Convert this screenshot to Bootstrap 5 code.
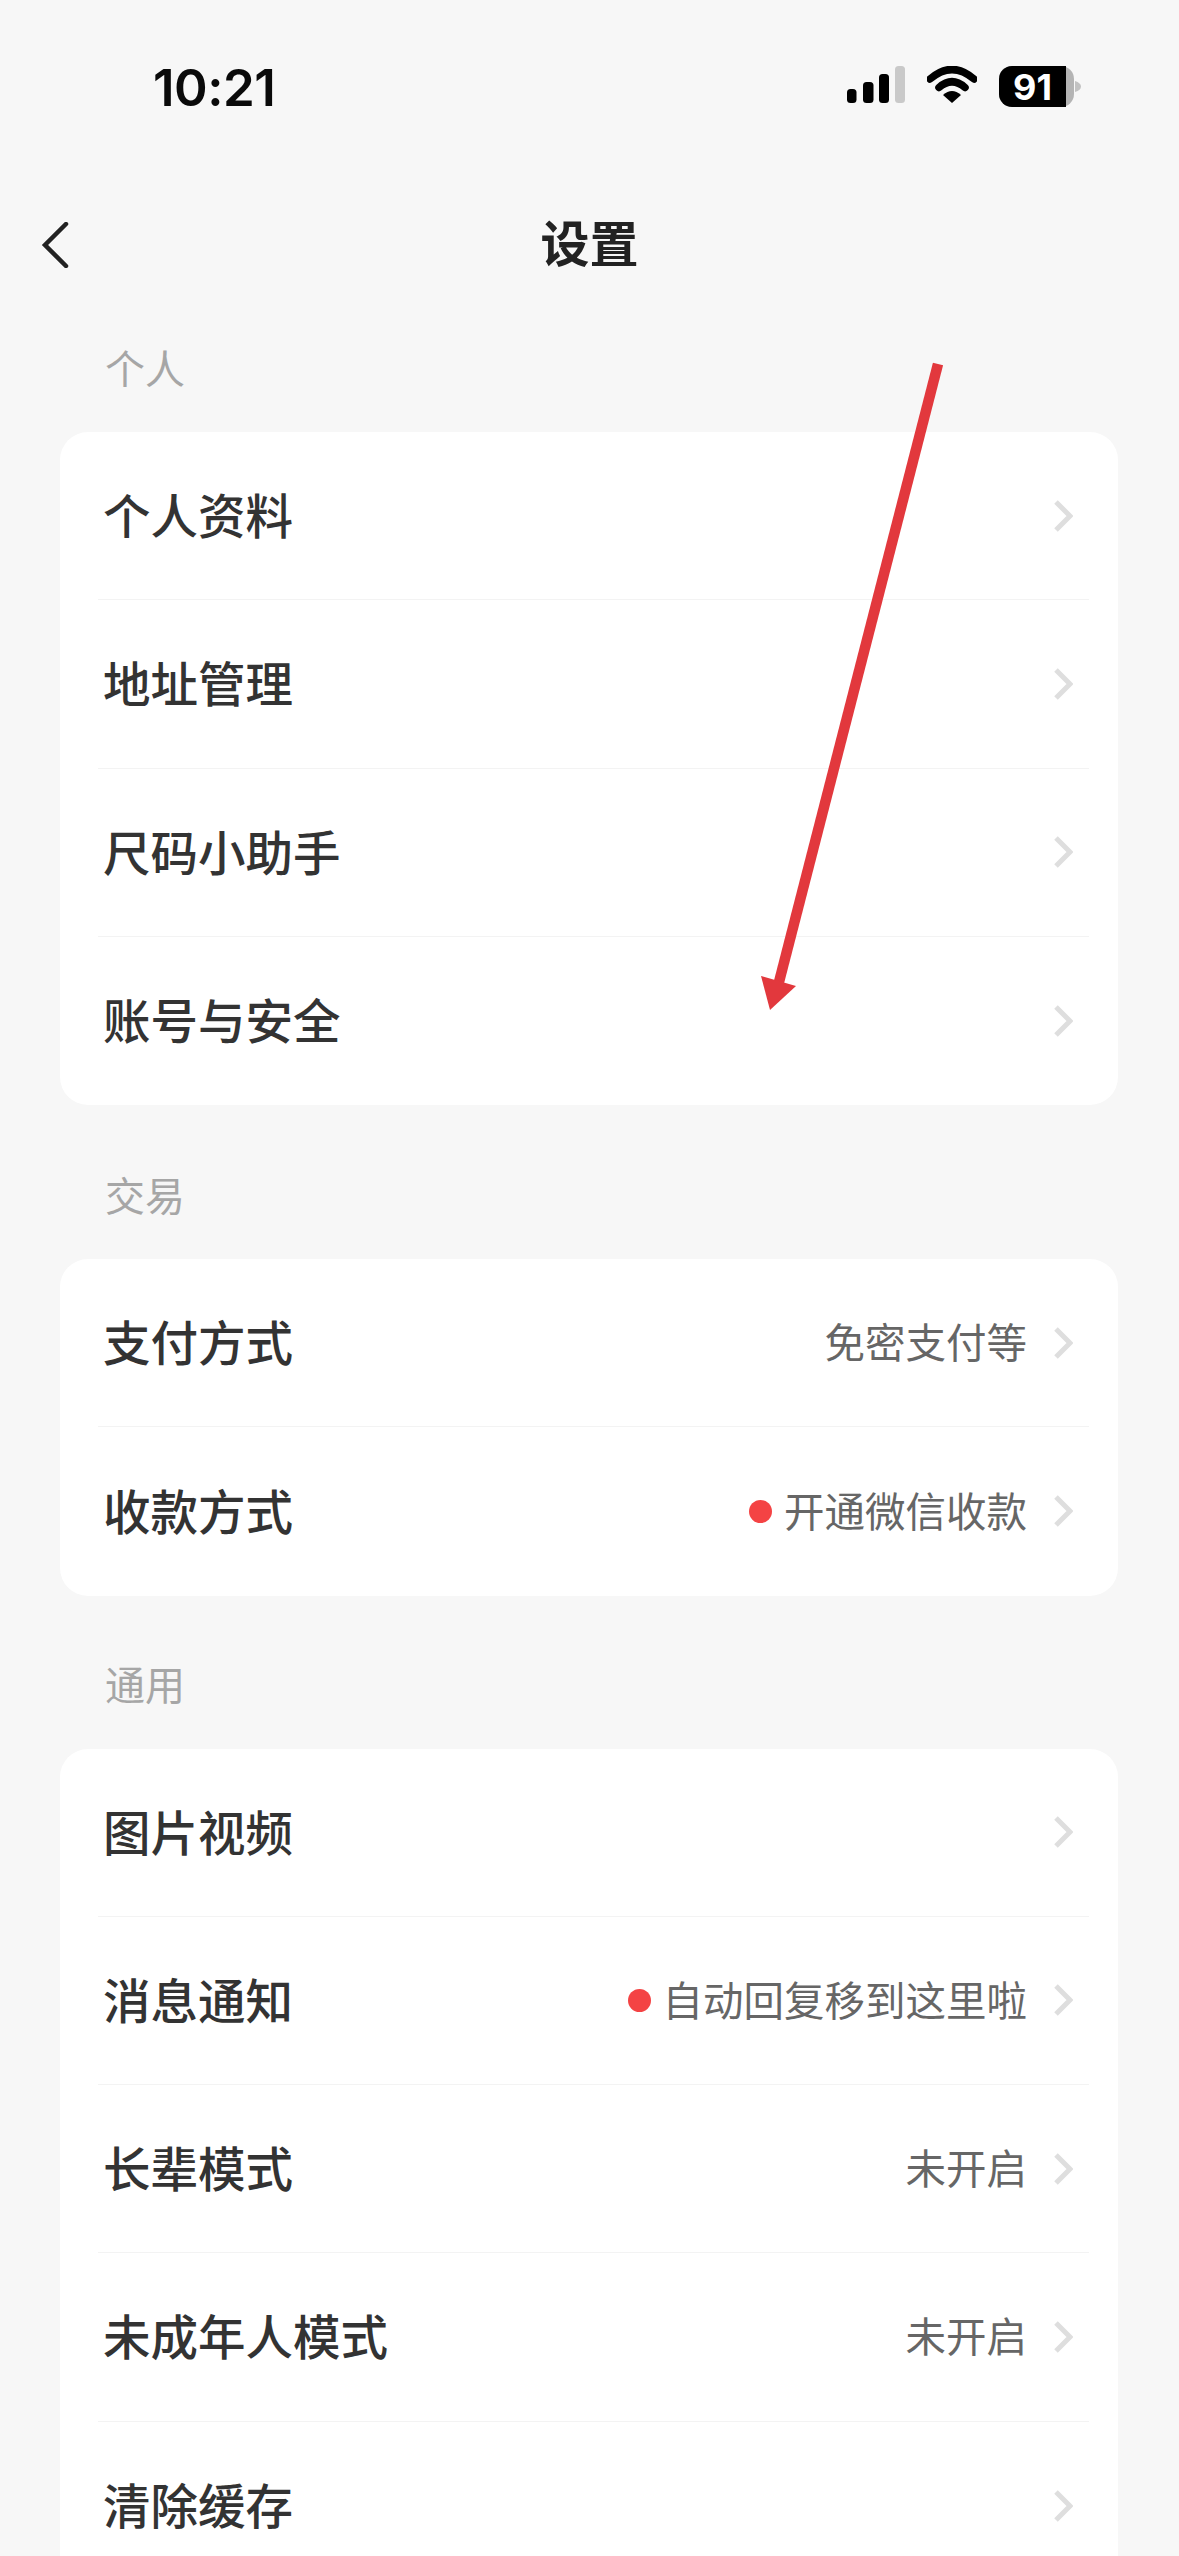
<!DOCTYPE html>
<html lang="zh-CN">

<head>
    <meta charset="UTF-8">
    <meta name="viewport" content="width=device-width, initial-scale=1.0">
    <title>设置</title>
    <link href="https://cdn.jsdelivr.net/npm/bootstrap@5.3.0/dist/css/bootstrap.min.css" rel="stylesheet">
    <style>
        html, body { height: 2556px; overflow: hidden; }
        body {
            background: #f7f7f7;
            color: #333;
            font-family: "Noto Sans CJK SC", "Liberation Sans", sans-serif;
            position: relative;
        }
        .status-bar { height: 170px; padding: 66px 98px 0 153px; }
        .status-time { font-family: Inter, "Liberation Sans", sans-serif; font-weight: 600; font-size: 51px; line-height: 44px; color: #0a0a0a; letter-spacing: -.5px; }
        .status-icons { gap: 22px; }
        .nav-row { height: 150px; display: grid; grid-template-columns: 1fr auto 1fr; align-items: center; }
        .nav-back { margin-left: 41px; }
        .nav-title { font-size: 49px; line-height: 60px; font-weight: 700; color: #222; padding-bottom: 8px; }
        .sec-title { font-size: 40px; line-height: 56px; color: #a6a6a6; padding: 61px 0 37px 45px; margin: 0 61px 0 60px; }
        .sec-title.first-title { padding-top: 19px; padding-bottom: 37px; }
        .sec-title.third-title { padding-top: 59px; padding-bottom: 38px; }
        .set-card { margin: 0 61px 0 60px; border-radius: 28px; background: #fff; border: 0; }
        .set-row { height: 168.25px; margin: 0 29px 0 38px; padding: 0 0 0 5px; border-bottom: 1px solid #f3f3f3; }
        .set-row:last-child { border-bottom: 0; }
        .row-name { font-size: 47.5px; font-weight: 500; color: #333; line-height: 60px; padding-bottom: 3px; }
        .row-val { font-size: 40.5px; color: #666; line-height: 56px; padding-bottom: 3px; }
        .row-dot { width: 23px; height: 23px; border-radius: 50%; background: #f44344; margin-right: 12px; }
        .row-chev { margin: 0 16px 0 26px; }
        .arrow-over { position: absolute; left: 0; top: 0; pointer-events: none; }
    </style>
</head>

<body>
    <div class="status-bar d-flex justify-content-between align-items-start">
        <div class="status-time">10:21</div>
        <div class="status-icons d-flex align-items-center">
            <svg width="58" height="42" viewBox="0 0 58 42">
                <rect x="0" y="23" width="9.5" height="14" rx="3.5" fill="#000" />
                <rect x="16" y="16" width="10.5" height="21" rx="3.5" fill="#000" />
                <rect x="32" y="8" width="10" height="29" rx="3.5" fill="#000" />
                <rect x="48" y="0" width="10" height="37" rx="3.5" fill="#c9c9c9" />
            </svg>
            <svg width="50" height="42" viewBox="0 0 50 42">
                <path d="M3 13 Q25 -6 47 13" fill="none" stroke="#000" stroke-width="7.5" stroke-linecap="round" />
                <path d="M12 21.5 Q25 10 38 21.5" fill="none" stroke="#000" stroke-width="7.5" stroke-linecap="round" />
                <path d="M16 29 Q25 21 34 29 L25 37 Z" fill="#000" />
            </svg>
            <svg width="82" height="42" viewBox="0 0 82 42">
                <rect x="0" y="0" width="75" height="41" rx="13" fill="#b4b4b4" />
                <path d="M13 0 H67 V41 H13 A13 13 0 0 1 0 28 V13 A13 13 0 0 1 13 0 Z" fill="#000" />
                <path d="M76 15 Q82 17 82 20.5 Q82 24 76 26 Z" fill="#c2c2c2" />
                <text x="33.5" y="34" text-anchor="middle" font-family="Inter, 'Liberation Sans', sans-serif" font-weight="700" font-size="36" fill="#fff">91</text>
            </svg>
        </div>
    </div>

    <div class="nav-row">
        <svg class="nav-back" width="28" height="46" viewBox="0 0 28 46">
            <path d="M25 2 L4 23 L25 44" fill="none" stroke="#222" stroke-width="4.5" stroke-linecap="round" stroke-linejoin="miter" />
        </svg>
        <div class="nav-title">设置</div>
    </div>

    <div class="sec-title first-title">个人</div>
    <div class="set-card card">
        <div class="set-row d-flex align-items-center justify-content-between"><span class="row-name">个人资料</span><span class="d-flex align-items-center"><svg class="row-chev" width="20" height="34" viewBox="0 0 20 34"><path d="M3 3 L17 17 L3 31" fill="none" stroke="#dedede" stroke-width="5" /></svg></span></div>
        <div class="set-row d-flex align-items-center justify-content-between"><span class="row-name">地址管理</span><span class="d-flex align-items-center"><svg class="row-chev" width="20" height="34" viewBox="0 0 20 34"><path d="M3 3 L17 17 L3 31" fill="none" stroke="#dedede" stroke-width="5" /></svg></span></div>
        <div class="set-row d-flex align-items-center justify-content-between"><span class="row-name">尺码小助手</span><span class="d-flex align-items-center"><svg class="row-chev" width="20" height="34" viewBox="0 0 20 34"><path d="M3 3 L17 17 L3 31" fill="none" stroke="#dedede" stroke-width="5" /></svg></span></div>
        <div class="set-row d-flex align-items-center justify-content-between"><span class="row-name">账号与安全</span><span class="d-flex align-items-center"><svg class="row-chev" width="20" height="34" viewBox="0 0 20 34"><path d="M3 3 L17 17 L3 31" fill="none" stroke="#dedede" stroke-width="5" /></svg></span></div>
    </div>

    <div class="sec-title">交易</div>
    <div class="set-card card">
        <div class="set-row d-flex align-items-center justify-content-between"><span class="row-name">支付方式</span><span class="d-flex align-items-center"><span class="row-val">免密支付等</span><svg class="row-chev" width="20" height="34" viewBox="0 0 20 34"><path d="M3 3 L17 17 L3 31" fill="none" stroke="#dedede" stroke-width="5" /></svg></span></div>
        <div class="set-row d-flex align-items-center justify-content-between"><span class="row-name">收款方式</span><span class="d-flex align-items-center"><span class="row-dot"></span><span class="row-val">开通微信收款</span><svg class="row-chev" width="20" height="34" viewBox="0 0 20 34"><path d="M3 3 L17 17 L3 31" fill="none" stroke="#dedede" stroke-width="5" /></svg></span></div>
    </div>

    <div class="sec-title third-title">通用</div>
    <div class="set-card card">
        <div class="set-row d-flex align-items-center justify-content-between"><span class="row-name">图片视频</span><span class="d-flex align-items-center"><svg class="row-chev" width="20" height="34" viewBox="0 0 20 34"><path d="M3 3 L17 17 L3 31" fill="none" stroke="#dedede" stroke-width="5" /></svg></span></div>
        <div class="set-row d-flex align-items-center justify-content-between"><span class="row-name">消息通知</span><span class="d-flex align-items-center"><span class="row-dot"></span><span class="row-val">自动回复移到这里啦</span><svg class="row-chev" width="20" height="34" viewBox="0 0 20 34"><path d="M3 3 L17 17 L3 31" fill="none" stroke="#dedede" stroke-width="5" /></svg></span></div>
        <div class="set-row d-flex align-items-center justify-content-between"><span class="row-name">长辈模式</span><span class="d-flex align-items-center"><span class="row-val">未开启</span><svg class="row-chev" width="20" height="34" viewBox="0 0 20 34"><path d="M3 3 L17 17 L3 31" fill="none" stroke="#dedede" stroke-width="5" /></svg></span></div>
        <div class="set-row d-flex align-items-center justify-content-between"><span class="row-name">未成年人模式</span><span class="d-flex align-items-center"><span class="row-val">未开启</span><svg class="row-chev" width="20" height="34" viewBox="0 0 20 34"><path d="M3 3 L17 17 L3 31" fill="none" stroke="#dedede" stroke-width="5" /></svg></span></div>
        <div class="set-row d-flex align-items-center justify-content-between"><span class="row-name">清除缓存</span><span class="d-flex align-items-center"><svg class="row-chev" width="20" height="34" viewBox="0 0 20 34"><path d="M3 3 L17 17 L3 31" fill="none" stroke="#dedede" stroke-width="5" /></svg></span></div>
    </div>

    <!-- flecha roja encima de la lista -->
    <svg class="arrow-over" width="1179" height="2556" viewBox="0 0 1179 2556">
        <path d="M938 364 L779 982" fill="none" stroke="#e2383d" stroke-width="10.5" />
        <path d="M761 976 L796 986 L770 1010 Z" fill="#e2383d" />
    </svg>

    <script src="https://cdn.jsdelivr.net/npm/bootstrap@5.3.0/dist/js/bootstrap.bundle.min.js"></script>
</body>

</html>
